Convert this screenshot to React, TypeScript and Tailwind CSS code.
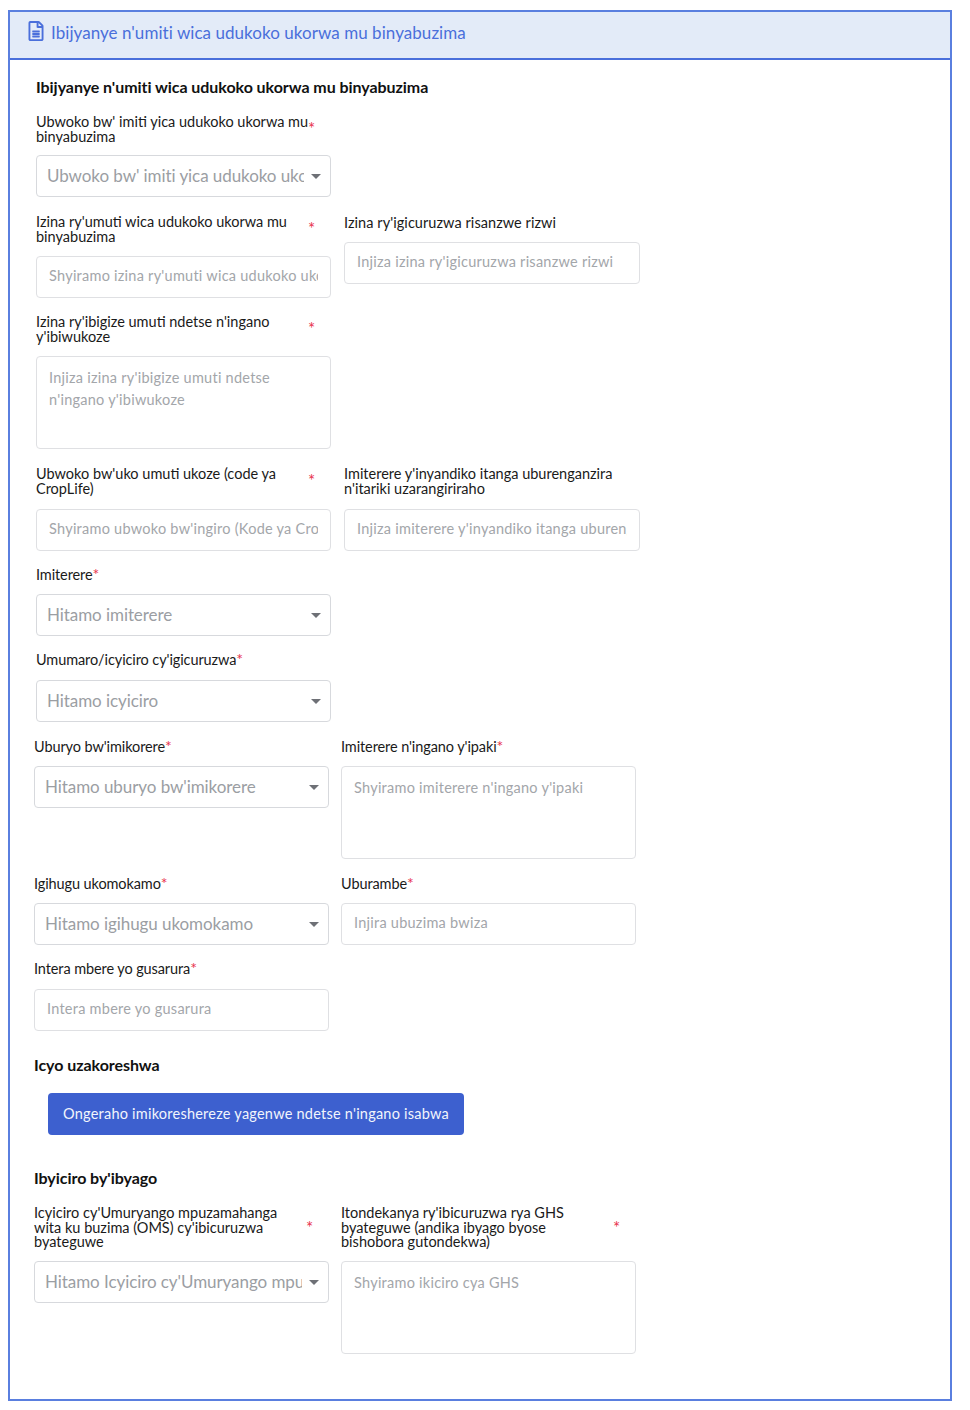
import React from 'react';

const font = "font-['Lato','Noto_Sans',sans-serif]";

const Caret = () => (
    <span className="pointer-events-none absolute right-[10px] top-[19px] h-0 w-0 border-x-[5px] border-t-[5px] border-x-transparent border-t-[#6e7076]" />
);

const Label = ({ text, req, plain }: { text: string; req?: boolean; plain?: boolean }) => {
    // short labels carry the star right after the text, long ones push it to the end of the row
    if (plain) {
        return (
            <label className={`block text-[14.5px] leading-[15px] text-[#1a1a1a] ${req ? 'tracking-[-0.1px]' : 'tracking-[0.06px]'}`}>
                {text}
                {req && <span className="text-[16px] leading-[0] text-[#e8344e]">*</span>}
            </label>
        );
    }
    return (
        <label className="flex items-center text-[14.5px] leading-[14.5px] text-[#1a1a1a]">
            <span className="w-[272px] whitespace-pre">{text}</span>
            {req && <span className="text-[17px] leading-[14.5px] text-[#e8344e]">*</span>}
        </label>
    );
};

const Select = ({ placeholder, className = '' }: { placeholder: string; className?: string }) => (
    <div className={`relative h-[41.5px] ${className}`}>
        <select
            defaultValue=""
            className="h-full w-full appearance-none rounded-[4px] border border-[#d7d9dd] bg-white pb-[1px] pl-[10px] pr-[26px] text-[17px] tracking-[-0.07px] text-[#9b9ea3] outline-none"
        >
            <option value="" disabled hidden>
                {placeholder}
            </option>
        </select>
        <Caret />
    </div>
);

const Input = ({ placeholder, className = '' }: { placeholder: string; className?: string }) => (
    <input
        placeholder={placeholder}
        className={`block h-[41.5px] w-full rounded-[4px] border border-[#dfe0e3] bg-white px-[12px] pb-[2px] text-[14.5px] tracking-[0.25px] outline-none placeholder:text-[#a3a6aa] ${className}`}
    />
);

const Area = ({ placeholder, className = '' }: { placeholder: string; className?: string }) => (
    <textarea
        placeholder={placeholder}
        className={`block h-[93px] w-full resize-none rounded-[4px] border border-[#dfe0e3] bg-white px-[12px] py-[9.5px] text-[14.5px] leading-[22px] tracking-[0.25px] outline-none placeholder:text-[#a3a6aa] ${className}`}
    />
);

export default function App() {
    return (
        <div className={`h-[1410px] bg-white pb-[9px] pl-[8px] pr-[18px] pt-[10px] ${font}`}>
            <div className="h-full border-2 border-[#5a7fdf]">
                <div className="flex h-[48px] items-center gap-[6px] border-b-2 border-[#4a6fdb] bg-[#e3ebf8] pb-[4px] pl-[17px] text-[#4a6fdb]">
                    <svg width="18" height="20" viewBox="0 0 384 512" fill="currentColor" className="mt-[-4px]">
                        <path d="M369.9 97.9 286 14C277 5 264.8-.1 252.1-.1H48C21.5 0 0 21.5 0 48v416c0 26.5 21.5 48 48 48h288c26.5 0 48-21.5 48-48V131.9c0-12.7-5.1-25-14.1-34zM332.1 128H256V51.9l76.1 76.1zM48 464V48h160v104c0 13.3 10.7 24 24 24h104v288H48zm240-212v28c0 6.6-5.4 12-12 12H108c-6.6 0-12-5.4-12-12v-28c0-6.6 5.4-12 12-12h168c6.6 0 12 5.4 12 12zm0 64v28c0 6.6-5.4 12-12 12H108c-6.6 0-12-5.4-12-12v-28c0-6.6 5.4-12 12-12h168c6.6 0 12 5.4 12 12zm0 64v28c0 6.6-5.4 12-12 12H108c-6.6 0-12-5.4-12-12v-28c0-6.6 5.4-12 12-12h168c6.6 0 12 5.4 12 12z" />
                    </svg>
                    <span className="text-[17px] tracking-[0.05px]">Ibijyanye n'umiti wica udukoko ukorwa mu binyabuzima</span>
                </div>

                <div className="pl-[26px]">
                    <h2 className="mt-[17px] text-[16px] font-bold leading-[20px] tracking-[-0.05px] text-[#111]">Ibijyanye n'umiti wica udukoko ukorwa mu binyabuzima</h2>

                    <div className="mt-[18px] w-[295px]">
                        <Label text={"Ubwoko bw' imiti yica udukoko ukorwa mu\nbinyabuzima"} req />
                        <Select placeholder="Ubwoko bw' imiti yica udukoko ukorwa mu binyabuzima" className="mt-[11px]" />
                    </div>

                    <div className="mt-[18.5px] grid grid-cols-[295px_296px] gap-x-[13px]">
                        <div>
                            <Label text={"Izina ry'umuti wica udukoko ukorwa mu\nbinyabuzima"} req />
                            <Input placeholder="Shyiramo izina ry'umuti wica udukoko ukorwa mu binyabuzima" className="mt-[12px]" />
                        </div>
                        <div>
                            <Label text="Izina ry'igicuruzwa risanzwe rizwi" plain />
                            <Input placeholder="Injiza izina ry'igicuruzwa risanzwe rizwi" className="mt-[12px]" />
                        </div>
                    </div>

                    <div className="mt-[17.5px] w-[295px]">
                        <Label text={"Izina ry'ibigize umuti ndetse n'ingano\ny'ibiwukoze"} req />
                        <Area placeholder="Injiza izina ry'ibigize umuti ndetse n'ingano y'ibiwukoze" className="mt-[12px]" />
                    </div>

                    <div className="mt-[18px] grid grid-cols-[295px_296px] gap-x-[13px]">
                        <div>
                            <Label text={"Ubwoko bw'uko umuti ukoze (code ya\nCropLife)"} req />
                            <Input placeholder="Shyiramo ubwoko bw'ingiro (Kode ya CropLife)" className="mt-[13px]" />
                        </div>
                        <div>
                            <Label text={"Imiterere y'inyandiko itanga uburenganzira\nn'itariki uzarangiriraho"} />
                            <Input placeholder="Injiza imiterere y'inyandiko itanga uburenganzira" className="mt-[13px]" />
                        </div>
                    </div>

                    <div className="mt-[16.5px] w-[295px]">
                        <Label text="Imiterere" req plain />
                        <Select placeholder="Hitamo imiterere" className="mt-[12px]" />
                    </div>

                    <div className="mt-[16.5px] w-[295px]">
                        <Label text="Umumaro/icyiciro cy'igicuruzwa" req plain />
                        <Select placeholder="Hitamo icyiciro" className="mt-[13px]" />
                    </div>
                </div>

                <div className="pl-[24px]">
                    <div className="mt-[17.5px] grid grid-cols-[295px_295px] gap-x-[12px]">
                        <div>
                            <Label text="Uburyo bw'imikorere" req plain />
                            <Select placeholder="Hitamo uburyo bw'imikorere" className="mt-[12px]" />
                        </div>
                        <div>
                            <Label text="Imiterere n'ingano y'ipaki" req plain />
                            <Area placeholder="Shyiramo imiterere n'ingano y'ipaki" className="mt-[12px]" />
                        </div>

                        <div className="mt-[17px]">
                            <Label text="Igihugu ukomokamo" req plain />
                            <Select placeholder="Hitamo igihugu ukomokamo" className="mt-[12px]" />
                        </div>
                        <div className="mt-[17px]">
                            <Label text="Uburambe" req plain />
                            <Input placeholder="Injira ubuzima bwiza" className="mt-[12px]" />
                        </div>

                        <div className="mt-[16.5px]">
                            <Label text="Intera mbere yo gusarura" req plain />
                            <Input placeholder="Intera mbere yo gusarura" className="mt-[13px]" />
                        </div>
                    </div>

                    <h2 className="mt-[24.5px] text-[16px] font-bold leading-[20px] tracking-[-0.05px] text-[#111]">Icyo uzakoreshwa</h2>

                    <button className="ml-[14px] mt-[18px] block h-[42px] w-[416px] rounded-[4px] bg-[#3d60cf] text-[14.5px] tracking-[0.23px] text-[#f2f5fc]">
                        Ongeraho imikoreshereze yagenwe ndetse n'ingano isabwa
                    </button>

                    <h2 className="mt-[33px] text-[16px] font-bold leading-[20px] tracking-[-0.05px] text-[#111]">Ibyiciro by'ibyago</h2>

                    <div className="mt-[18px] grid grid-cols-[295px_295px] gap-x-[12px]">
                        <div>
                            <Label text={"Icyiciro cy'Umuryango mpuzamahanga\nwita ku buzima (OMS) cy'ibicuruzwa\nbyateguwe"} req />
                            <Select placeholder="Hitamo Icyiciro cy'Umuryango mpuzamahanga" className="mt-[11.5px]" />
                        </div>
                        <div>
                            <Label text={"Itondekanya ry'ibicuruzwa rya GHS\nbyateguwe (andika ibyago byose\nbishobora gutondekwa)"} req />
                            <Area placeholder="Shyiramo ikiciro cya GHS" className="mt-[11.5px]" />
                        </div>
                    </div>
                </div>
            </div>
        </div>
    );
}
